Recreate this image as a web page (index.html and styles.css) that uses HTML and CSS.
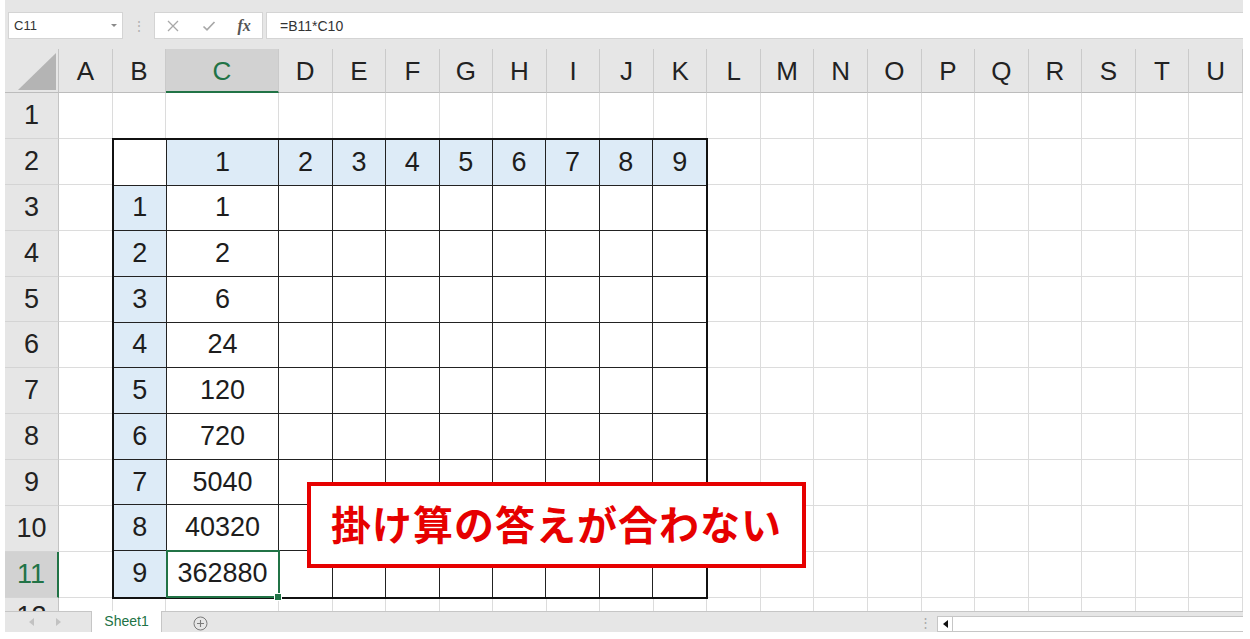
FILE: index.html
```html
<!DOCTYPE html>
<html lang="ja">
<head>
<meta charset="utf-8">
<title>Excel</title>
<link rel="stylesheet" href="styles.css">
</head>
<body>
<div class="app">
  <div class="fbar">
    <div class="namebox"><span>C11</span><i class="dd"></i></div>
    <div class="grip">⋮</div>
    <div class="fx-icons">
      <span class="ico"><svg width="12" height="12" viewBox="0 0 12 12"><path d="M1 1L11 11M11 1L1 11" stroke="#a8a8a8" stroke-width="1.3" fill="none"/></svg></span>
      <span class="ico"><svg width="14" height="12" viewBox="0 0 14 12"><path d="M1.5 6.5L5 9.8L12.5 2" stroke="#a8a8a8" stroke-width="1.7" fill="none"/></svg></span>
      <span class="ico fx">fx</span>
    </div>
    <div class="formula">=B11*C10</div>
  </div>

  <div class="sheet">
    <div class="corner"><svg width="54" height="44" viewBox="0 0 54 44"><polygon points="13,41 51,41 51,4" fill="#b4b4b4"/></svg></div>
    <div class="ch">A</div><div class="ch">B</div><div class="ch on">C</div><div class="ch">D</div><div class="ch">E</div><div class="ch">F</div><div class="ch">G</div>
    <div class="ch">H</div><div class="ch">I</div><div class="ch">J</div><div class="ch">K</div><div class="ch">L</div><div class="ch">M</div><div class="ch">N</div>
    <div class="ch">O</div><div class="ch">P</div><div class="ch">Q</div><div class="ch">R</div><div class="ch">S</div><div class="ch">T</div><div class="ch">U</div>

    <div class="rh">1</div>
    <div></div><div></div><div></div><div></div><div></div><div></div><div></div>
    <div></div><div></div><div></div><div></div><div></div><div></div><div></div>
    <div></div><div></div><div></div><div></div><div></div><div></div><div></div>

    <div class="rh">2</div><div></div>
    <div></div><div></div><div></div><div></div><div></div><div></div><div></div><div></div><div></div><div></div>
    <div class="rh">3</div><div></div>
    <div></div><div></div><div></div><div></div><div></div><div></div><div></div><div></div><div></div><div></div>
    <div class="rh">4</div><div></div>
    <div></div><div></div><div></div><div></div><div></div><div></div><div></div><div></div><div></div><div></div>
    <div class="rh">5</div><div></div>
    <div></div><div></div><div></div><div></div><div></div><div></div><div></div><div></div><div></div><div></div>
    <div class="rh">6</div><div></div>
    <div></div><div></div><div></div><div></div><div></div><div></div><div></div><div></div><div></div><div></div>
    <div class="rh">7</div><div></div>
    <div></div><div></div><div></div><div></div><div></div><div></div><div></div><div></div><div></div><div></div>
    <div class="rh">8</div><div></div>
    <div></div><div></div><div></div><div></div><div></div><div></div><div></div><div></div><div></div><div></div>
    <div class="rh">9</div><div></div>
    <div></div><div></div><div></div><div></div><div></div><div></div><div></div><div></div><div></div><div></div>
    <div class="rh">10</div><div></div>
    <div></div><div></div><div></div><div></div><div></div><div></div><div></div><div></div><div></div><div></div>
    <div class="rh on">11</div><div></div>
    <div></div><div></div><div></div><div></div><div></div><div></div><div></div><div></div><div></div><div></div>

    <div class="rh r12">12</div>
    <div></div><div></div><div></div><div></div><div></div><div></div><div></div>
    <div></div><div></div><div></div><div></div><div></div><div></div><div></div>
    <div></div><div></div><div></div><div></div><div></div><div></div><div></div>

    <div class="tbl">
      <div class="w"></div><div class="h">1</div><div class="h">2</div><div class="h">3</div><div class="h">4</div><div class="h">5</div><div class="h">6</div><div class="h">7</div><div class="h">8</div><div class="h">9</div>
      <div class="h">1</div><div>1</div><div></div><div></div><div></div><div></div><div></div><div></div><div></div><div></div>
      <div class="h">2</div><div>2</div><div></div><div></div><div></div><div></div><div></div><div></div><div></div><div></div>
      <div class="h">3</div><div>6</div><div></div><div></div><div></div><div></div><div></div><div></div><div></div><div></div>
      <div class="h">4</div><div>24</div><div></div><div></div><div></div><div></div><div></div><div></div><div></div><div></div>
      <div class="h">5</div><div>120</div><div></div><div></div><div></div><div></div><div></div><div></div><div></div><div></div>
      <div class="h">6</div><div>720</div><div></div><div></div><div></div><div></div><div></div><div></div><div></div><div></div>
      <div class="h">7</div><div>5040</div><div></div><div></div><div></div><div></div><div></div><div></div><div></div><div></div>
      <div class="h">8</div><div>40320</div><div></div><div></div><div></div><div></div><div></div><div></div><div></div><div></div>
      <div class="h">9</div><div class="sel">362880</div><div></div><div></div><div></div><div></div><div></div><div></div><div></div><div></div>
    </div>

    <div class="callout">掛け算の答えが合わない</div>
  </div>

  <div class="tabs">
    <div class="nav">
      <svg width="6" height="8" viewBox="0 0 6 8"><polygon points="5,0 5,8 0,4" fill="#c2c2c2"/></svg>
      <svg width="6" height="8" viewBox="0 0 6 8"><polygon points="1,0 1,8 6,4" fill="#c2c2c2"/></svg>
    </div>
    <div class="tab">Sheet1</div>
    <div class="add"><svg width="15" height="15" viewBox="0 0 15 15"><circle cx="7.5" cy="7.5" r="6.5" fill="none" stroke="#7a7a7a" stroke-width="1"/><path d="M7.5 4V11M4 7.5H11" stroke="#7a7a7a" stroke-width="1.1"/></svg></div>
    <div class="hs">
      <div class="hgrip">⋮</div>
      <div class="hbar"><div class="hbtn"><svg width="5" height="8" viewBox="0 0 5 8"><polygon points="5,0 5,8 0,4" fill="#111"/></svg></div></div>
    </div>
  </div>
</div>
</body>
</html>
```

FILE: styles.css
```css
* { box-sizing: border-box; }
html, body { margin: 0; padding: 0; background: #fff; }
body { font-family: "Liberation Sans", Arial, sans-serif; color: #222; }

.app { margin-left: 5px; width: 1238px; }

/* formula bar */
.fbar {
  height: 49px;
  background: #e6e6e6;
  display: flex;
  align-items: flex-start;
  padding: 12px 0 0 3px;
}
.namebox {
  width: 115px; height: 27px;
  background: #fff;
  border: 1px solid #d4d4d4;
  display: flex; align-items: center; justify-content: space-between;
  padding: 0 5px 0 5px;
  font-size: 13px; color: #333;
}
.dd {
  width: 0; height: 0;
  border-left: 3px solid transparent;
  border-right: 3px solid transparent;
  border-top: 3px solid #8a8a8a;
}
.grip {
  width: 31px; height: 27px;
  display: flex; align-items: center; justify-content: center;
  color: #b3b3b3; font-size: 14px;
}
.fx-icons {
  width: 109px; height: 27px;
  background: #fff;
  border: 1px solid #d4d4d4;
  display: flex;
}
.ico { width: 36px; display: flex; align-items: center; justify-content: center; }
.fx { font-family: "Liberation Serif", serif; font-style: italic; font-weight: 700; font-size: 16px; color: #555; }
.formula {
  flex: 1; height: 27px;
  margin-left: 3px;
  background: #fff;
  border: 1px solid #d4d4d4; border-right: none;
  padding-left: 13px;
  display: flex; align-items: center;
  font-size: 14px; color: #333;
}

/* sheet grid */
.sheet {
  position: relative;
  height: 562px;
  overflow: hidden;
  display: grid;
  grid-template-columns: 54px 53.7px 53.3px 113px repeat(18, 53.56px);
  grid-template-rows: 44px repeat(12, 45.9px);
  font-size: 27px;
  color: #1d1d1d;
}
.sheet > div {
  border-right: 1px solid #dcdcdc;
  border-bottom: 1px solid #dcdcdc;
  display: flex; align-items: center; justify-content: center;
}
.sheet > .corner {
  background: #e6e6e6;
  border-right-color: #c4c4c4;
  border-bottom-color: #bcbcbc;
  display: block;
}
.corner svg { display: block; }
.sheet > .ch {
  background: #e6e6e6;
  border-right-color: #cacaca;
  border-bottom-color: #bcbcbc;
  font-size: 26px;
  color: #222;
  padding-top: 2px;
}
.sheet > .ch.on {
  background: #d2d2d2;
  color: #217346;
  border-bottom: 2px solid #217346;
}
.sheet > .rh {
  background: #e6e6e6;
  border-right-color: #c4c4c4;
  border-bottom-color: #d4d4d4;
  font-size: 27px;
  color: #222;
}
.sheet > .rh.on {
  background: #d2d2d2;
  color: #217346;
  border-right: 2px solid #217346;
}
.sheet > .r12 { align-items: flex-start; padding-top: 3px; }

/* table */
.sheet > .tbl {
  grid-row: 3 / 13;
  grid-column: 3 / 13;
  margin: -1px;
  border: 2px solid #111;
  display: grid;
  align-items: stretch;
  justify-items: stretch;
  justify-content: stretch;
  align-content: stretch;
  grid-template-columns: 53.3fr 113fr repeat(8, 53.56fr);
  grid-template-rows: repeat(10, 1fr);
  background: #fff;
}
.tbl > div {
  border-right: 1px solid #222;
  border-bottom: 1px solid #222;
  display: flex; align-items: center; justify-content: center;
  min-width: 0;
}
.tbl > div:nth-child(10n) { border-right: none; }
.tbl > div:nth-last-child(-n+10) { border-bottom: none; }
.tbl > .h { background: #ddebf7; }
.tbl > .sel {
  position: relative;
  outline: 2px solid #217346;
  outline-offset: -1px;
  z-index: 1;
}
.tbl > .sel::after {
  content: "";
  position: absolute;
  right: -4px; bottom: -4px;
  width: 6px; height: 6px;
  background: #217346;
  border: 1px solid #fff;
}

/* callout */
.sheet > .callout {
  position: absolute;
  left: 302px; top: 433px;
  width: 499px; height: 86px;
  border: 4px solid #e60000;
  background: #fff;
  display: flex; align-items: center; justify-content: center;
  font-family: "Noto Sans CJK JP", sans-serif;
  font-weight: 700;
  font-size: 40px;
  letter-spacing: 1px;
  color: #e60000;
  z-index: 3;
  padding-bottom: 4px;
}

/* tab bar */
.tabs {
  height: 21px;
  display: flex;
  background: #e6e6e6;
  border-top: 1px solid #c6c6c6;
  position: relative;
  z-index: 4;
}
.nav {
  width: 87px;
  display: flex; align-items: center; justify-content: center; gap: 20px;
  border-right: 1px solid #c6c6c6;
  padding-right: 6px;
}
.tab {
  width: 70px;
  background: #fff;
  border-right: 1px solid #c6c6c6;
  margin-top: -1px;
  display: flex; align-items: center; justify-content: center;
  font-size: 14px; color: #217346;
  padding-bottom: 1px;
}
.add { width: 76px; display: flex; align-items: center; justify-content: center; padding-top: 2px; }
.hs { margin-left: auto; width: 330px; display: flex; align-items: center; }
.hgrip { width: 24px; text-align: center; color: #a9a9a9; font-size: 13px; line-height: 1; }
.hbar {
  flex: 1; height: 16px;
  margin-top: 3px;
  background: #fff;
  border: 1px solid #c6c6c6; border-right: none;
  display: flex;
}
.hbtn {
  width: 15px;
  border-right: 1px solid #c6c6c6;
  display: flex; align-items: center; justify-content: center;
}
```
